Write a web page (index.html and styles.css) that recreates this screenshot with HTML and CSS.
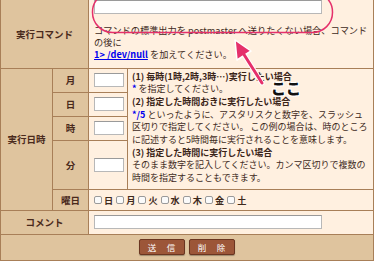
FILE: index.html
```html
<!DOCTYPE html>
<html lang="ja">
<head>
    <meta charset="UTF-8" />
    <title>cron 設定</title>
    <link rel="stylesheet" href="styles.css">
</head>
<body>
    <form>
        <table class="cron-form">
            <colgroup>
                <col class="c-when">
                <col class="c-unit">
                <col class="c-num">
                <col>
            </colgroup>
            <tr class="r-cmd">
                <th colspan="2">実行コマンド</th>
                <td colspan="2" class="command">
                    <input type="text" class="text-wide">
                    <p class="note">コマンドの標準出力を postmaster へ送りたくない場合、コマンドの後に<br><a href="#">1&gt; /dev/null</a> を加えてください。</p>
                </td>
            </tr>
            <tr class="r-num">
                <th rowspan="5">実行日時</th>
                <th>月</th>
                <td><input type="text" class="text-small"></td>
                <td rowspan="4" class="help">
                    <b>(1) 毎時(1時,2時,3時…)実行したい場合</b><br>
                    <em>*</em> を指定してください。<br>
                    <b>(2) 指定した時間おきに実行したい場合</b><br>
                    <em>*/5</em> といったように、アスタリスクと数字を、スラッシュ区切りで指定してください。 この例の場合は、時のところに記述すると5時間毎に実行されることを意味します。<br>
                    <b>(3) 指定した時間に実行したい場合</b><br>
                    そのまま数字を記入してください。カンマ区切りで複数の時間を指定することもできます。
                </td>
            </tr>
            <tr class="r-num">
                <th>日</th>
                <td><input type="text" class="text-small"></td>
            </tr>
            <tr class="r-num">
                <th>時</th>
                <td><input type="text" class="text-small"></td>
            </tr>
            <tr class="r-min">
                <th>分</th>
                <td><input type="text" class="text-small"></td>
            </tr>
            <tr class="r-day">
                <th>曜日</th>
                <td colspan="2">
                    <div class="days">
                        <label><input type="checkbox">日</label>
                        <label><input type="checkbox">月</label>
                        <label><input type="checkbox">火</label>
                        <label><input type="checkbox">水</label>
                        <label><input type="checkbox">木</label>
                        <label><input type="checkbox">金</label>
                        <label><input type="checkbox">土</label>
                    </div>
                </td>
            </tr>
            <tr class="r-cmt">
                <th colspan="2">コメント</th>
                <td colspan="2"><input type="text" class="text-wide"></td>
            </tr>
            <tr class="r-act">
                <td colspan="4" class="actions">
                    <button type="button" class="btn">送　信</button>
                    <button type="button" class="btn">削　除</button>
                </td>
            </tr>
        </table>
    </form>

    <!-- annotation layer -->
    <svg class="mark" width="375" height="100" viewBox="0 0 375 100">
        <rect x="92.5" y="-8" width="240" height="40.5" rx="20" ry="20" fill="none" stroke="#e5306b" stroke-width="1.5"/>
        <line x1="262" y1="83" x2="243" y2="53" stroke="#fff" stroke-width="5" stroke-linecap="round"/>
        <polygon points="235,40 251,51 237,60" fill="#e5306b" stroke="#fff" stroke-width="1.5" stroke-linejoin="round"/>
        <line x1="262" y1="83" x2="243" y2="53" stroke="#e5306b" stroke-width="3" stroke-linecap="round"/>
    </svg>
    <div class="mark-label">ここ</div>
</body>
</html>
```
FILE: styles.css
```css
body {
    margin: 0;
    background-color: #fff;
    font-family: "Noto Sans CJK JP", "Noto Sans", sans-serif;
    color: #3e2a1c;
    position: relative;
    width: 375px;
    height: 261px;
    overflow: hidden;
}

form {
    margin: 0;
}

.cron-form {
    width: 374px;
    table-layout: fixed;
    border-collapse: collapse;
    border: 1px solid #a87f58;
    border-top: none;
}

.c-when { width: 52px; }
.c-unit { width: 36px; }
.c-num  { width: 39px; }

.r-cmd { height: 68px; }
.r-num { height: 24px; }
.r-min { height: 49px; }
.r-day { height: 21px; }
.r-cmt { height: 24px; }
.r-act { height: 26px; }

.cron-form th,
.cron-form td {
    border: 1px solid #a87f58;
    padding: 0;
}

.r-cmd > th,
.r-cmd > td {
    border-top: none;
}

.cron-form th {
    background-color: #dfc49e;
    color: #4a2a1c;
    font-weight: bold;
    font-size: 9.5px;
    text-align: center;
}

.cron-form td {
    background-color: #fff0e0;
    font-size: 9.2px;
    line-height: 12px;
    padding-left: 5px;
}

.command {
    vertical-align: top;
    padding-top: 5px;
}

.note {
    margin: 10px 0 0;
}

.note a {
    color: #0000ee;
    font-weight: bold;
}

.cron-form .help {
    vertical-align: top;
    padding: 2px 2px 0 4px;
    font-size: 9px;
    line-height: 12.7px;
}

.help b {
    color: #3a2418;
}

.help em {
    font-style: normal;
    font-weight: bold;
    color: #0000ee;
}

input[type="text"] {
    display: block;
    box-sizing: border-box;
    border: 1px solid #b8b8b8;
    border-top-color: #9a9a9a;
    background-color: #fff;
    padding: 0;
    margin: 0;
    height: 14px;
}

.text-wide {
    width: 228px;
}

.text-small {
    width: 30px;
}

.days {
    display: flex;
    gap: 3px;
}

.days label {
    display: flex;
    align-items: center;
    gap: 2px;
    font-weight: bold;
}

.days input {
    appearance: none;
    margin: 0;
    width: 8px;
    height: 8px;
    border: 1px solid #9a9a9a;
    border-radius: 2px;
    background-color: #fafafa;
}

.cron-form .actions {
    background-color: #dfc49e;
    text-align: center;
    padding: 0;
}

.btn {
    width: 46px;
    height: 16px;
    margin: 0 1px;
    padding: 0;
    vertical-align: middle;
    background-color: #9c5638;
    border: 1px solid #6a3520;
    border-radius: 2px;
    color: #fff;
    font-family: "Noto Sans CJK JP", sans-serif;
    font-size: 8.5px;
    letter-spacing: 1px;
    box-shadow: 0 1px 1px rgba(0, 0, 0, 0.3);
}

.mark {
    position: absolute;
    left: 0;
    top: 0;
    pointer-events: none;
}

.mark-label {
    position: absolute;
    left: 271px;
    top: 79px;
    font-family: "Noto Sans CJK JP", sans-serif;
    font-weight: 900;
    font-size: 15px;
    line-height: 18px;
    color: #111;
    text-shadow: 1px 1px 0 #fff, -1px -1px 0 #fff, 1px -1px 0 #fff, -1px 1px 0 #fff;
}
```
